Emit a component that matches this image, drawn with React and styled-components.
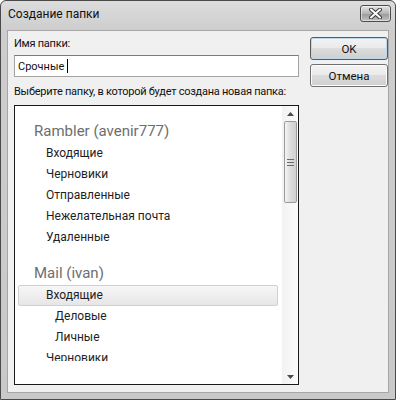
import React from 'react';
import styled, { createGlobalStyle } from 'styled-components';

const GlobalStyle = createGlobalStyle`
  html, body {
    margin: 0;
    padding: 0;
    background: #ffffff;
  }
  body {
    font-family: Roboto, "Noto Sans", sans-serif;
    font-size: 12px;
    color: #111;
  }
`;

const Window = styled.div`
  width: 396px;
  height: 400px;
  box-sizing: border-box;
  border: 1px solid #4a4a4a;
  border-radius: 6px 6px 0 0;
  background: linear-gradient(#dcdcdc, #cdcdcd 30px, #c9c9c9);
  display: flex;
  flex-direction: column;
`;

const TitleBar = styled.div`
  height: 29px;
  display: flex;
  align-items: flex-start;
  justify-content: space-between;
  padding: 0 4px 0 7px;
`;

const Title = styled.span`
  margin-top: 6px;
  font-size: 12px;
  color: #111;
`;

const CloseButton = styled.div`
  margin-top: 4px;
  width: 29px;
  height: 15px;
  border: 1px solid #4c4c4c;
  border-radius: 3px;
  background: linear-gradient(#e4e4e4, #b4b4b4 50%, #9a9a9a 51%, #c0c0c0);
  box-shadow: inset 0 0 0 1px rgba(255, 255, 255, 0.5);
  display: flex;
  align-items: center;
  justify-content: center;
`;

const Body = styled.div`
  flex: 1;
  margin: 0 6px 6px 6px;
  border: 1px solid #a6a6a6;
  background: #f0f0f0;
  display: flex;
  gap: 11px;
  padding: 5px 0 0 6px;
`;

const LeftColumn = styled.div`
  width: 285px;
  display: flex;
  flex-direction: column;
`;

const Label = styled.div`
  height: 16px;
  line-height: 16px;
  font-size: 11px;
  letter-spacing: -0.25px;
  white-space: nowrap;
  margin-bottom: ${(p) => p.$gap || 0}px;
`;

const TextInput = styled.div`
  height: 22px;
  box-sizing: border-box;
  border: 1px solid #a3a3a3;
  border-top-color: #7b7b7b;
  background: #fff;
  display: flex;
  align-items: center;
  padding-left: 3px;
  margin-bottom: 7px;
  font-size: 11px;
`;

const Caret = styled.span`
  display: inline-block;
  width: 1px;
  height: 14px;
  background: #000;
  margin-left: 3px;
`;

const ListBox = styled.div`
  height: 280px;
  box-sizing: border-box;
  border: 1px solid #1a1a1a;
  background: #fff;
  display: flex;
`;

const ListPane = styled.div`
  flex: 1;
  padding-bottom: 23px;
`;

const Viewport = styled.div`
  height: 255px;
  overflow: hidden;
  padding: 13px 4px 0 3px;
  box-sizing: border-box;
`;

const GroupHeader = styled.div`
  height: 24px;
  line-height: 24px;
  padding-left: 16px;
  font-size: 15px;
  color: #6e6e6e;
  margin-top: ${(p) => (p.$first ? 0 : 13)}px;
`;

const Item = styled.div`
  height: 21px;
  box-sizing: border-box;
  padding-left: ${(p) => (p.$level === 2 ? 36 : 27)}px;
  font-size: 12px;
  color: #1e1e1e;
  border-radius: 2px;
  border: 1px solid ${(p) => (p.$selected ? '#d0d0d0' : 'transparent')};
  background: ${(p) =>
    p.$selected ? 'linear-gradient(#f7f7f7, #e6e6e6)' : 'transparent'};
  line-height: 19px;
`;

const ScrollBar = styled.div`
  width: 16px;
  display: flex;
  flex-direction: column;
  align-items: center;
  background: linear-gradient(90deg, #f2f2f2, #fbfbfb);
`;

const Arrow = styled.div`
  height: 15px;
  width: 100%;
  display: flex;
  align-items: center;
  justify-content: center;
`;

const Thumb = styled.div`
  width: 13px;
  height: 82px;
  box-sizing: border-box;
  border: 1px solid #9a9a9a;
  border-radius: 2px;
  background: linear-gradient(90deg, #f4f4f4, #dcdcdc 50%, #cfcfcf);
  display: flex;
  align-items: center;
  justify-content: center;
`;

const Track = styled.div`
  flex: 1;
`;

const RightColumn = styled.div`
  display: flex;
  flex-direction: column;
  gap: 4px;
  padding-top: 1px;
`;

const Button = styled.div`
  width: 78px;
  height: 23px;
  box-sizing: border-box;
  border: 1px solid ${(p) => (p.$default ? '#5a5a5a' : '#707070')};
  border-radius: 3px;
  background: linear-gradient(#f3f3f3, #ebebeb 45%, #dcdcdc 50%, #cfcfcf);
  box-shadow: inset 0 0 0 1px ${(p) => (p.$default ? '#bcd8ea' : '#fcfcfc')};
  display: flex;
  align-items: center;
  justify-content: center;
  font-size: 11.5px;
  color: #111;
`;

const ArrowIcon = ({ down }) => (
  <svg width="7" height="4" viewBox="0 0 7 4">
    <path d={down ? 'M0 0 H7 L3.5 4 Z' : 'M0 4 H7 L3.5 0 Z'} fill="#4a4a4a" />
  </svg>
);

const Grip = () => (
  <svg width="7" height="7" viewBox="0 0 7 7">
    <path d="M0 0.5 H7 M0 3.5 H7 M0 6.5 H7" stroke="#6a6a6a" strokeWidth="1" />
  </svg>
);

const CloseIcon = () => (
  <svg width="13" height="11" viewBox="0 0 13 11">
    <path d="M2 1.5 L11 9.5 M11 1.5 L2 9.5" stroke="#3a3a3a" strokeWidth="4" strokeLinecap="round" />
    <path d="M2 1.5 L11 9.5 M11 1.5 L2 9.5" stroke="#ffffff" strokeWidth="2" strokeLinecap="round" />
  </svg>
);

const accounts = [
  {
    name: 'Rambler (avenir777)',
    folders: [
      { name: 'Входящие' },
      { name: 'Черновики' },
      { name: 'Отправленные' },
      { name: 'Нежелательная почта' },
      { name: 'Удаленные' },
    ],
  },
  {
    name: 'Mail (ivan)',
    folders: [
      { name: 'Входящие', selected: true },
      { name: 'Деловые', level: 2 },
      { name: 'Личные', level: 2 },
      { name: 'Черновики' },
    ],
  },
];

export default function App() {
  return (
    <>
      <GlobalStyle />
      <Window>
        <TitleBar>
          <Title>Создание папки</Title>
          <CloseButton>
            <CloseIcon />
          </CloseButton>
        </TitleBar>
        <Body>
          <LeftColumn>
            <Label $gap={3}>Имя папки:</Label>
            <TextInput>
              Срочные
              <Caret />
            </TextInput>
            <Label $gap={5}>Выберите папку, в которой будет создана новая папка:</Label>
            <ListBox>
              <ListPane>
                <Viewport>
                  {accounts.map((acc, i) => (
                    <React.Fragment key={acc.name}>
                      <GroupHeader $first={i === 0}>{acc.name}</GroupHeader>
                      {acc.folders.map((f, j) => (
                        <Item key={j} $level={f.level} $selected={f.selected}>
                          {f.name}
                        </Item>
                      ))}
                    </React.Fragment>
                  ))}
                </Viewport>
              </ListPane>
              <ScrollBar>
                <Arrow>
                  <ArrowIcon />
                </Arrow>
                <Thumb>
                  <Grip />
                </Thumb>
                <Track />
                <Arrow>
                  <ArrowIcon down />
                </Arrow>
              </ScrollBar>
            </ListBox>
          </LeftColumn>
          <RightColumn>
            <Button $default>OK</Button>
            <Button>Отмена</Button>
          </RightColumn>
        </Body>
      </Window>
    </>
  );
}
